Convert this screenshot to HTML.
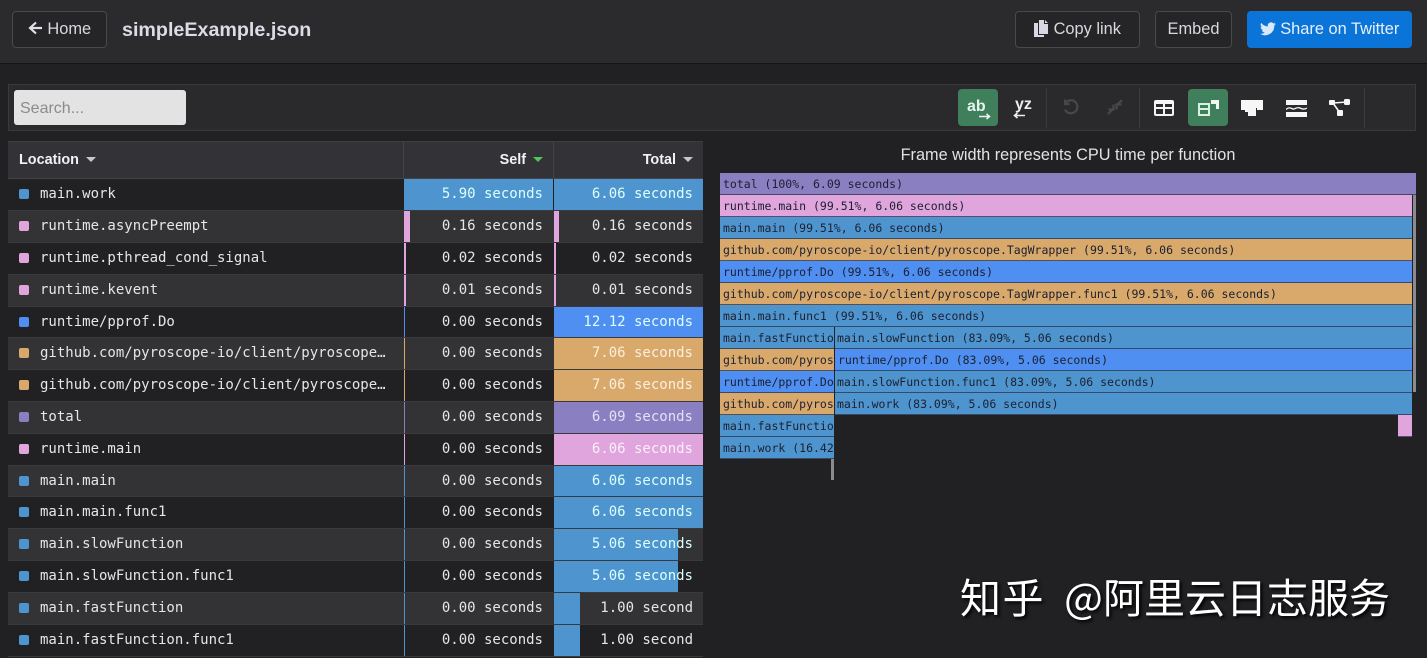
<!DOCTYPE html>
<html><head><meta charset="utf-8"><style>
*{box-sizing:border-box}
html,body{margin:0;padding:0;width:1427px;height:658px;overflow:hidden;background:#212124;font-family:"Liberation Sans",sans-serif;color:#e8e8ee}
#root{position:absolute;left:0;top:0;width:1427px;height:658px;overflow:hidden}
.a{position:absolute}
#hd{left:0;top:0;width:1427px;height:64px;background:#2b2b2e;border-bottom:1px solid #151517}
.btn{position:absolute;top:11px;height:37px;border:1px solid #49494d;border-radius:4px;background:#252528;font-size:16.4px;line-height:35px;text-align:center;color:#d8d8de;white-space:nowrap}
#tb{left:8px;top:84px;width:1408px;height:47px;background:#2a2a2d;border:1px solid #3a3a3e}
.sep{position:absolute;top:88px;height:40px;width:1px;background:#3b3b3f}
.gb{position:absolute;top:89px;width:40px;height:37px;background:#3f7f5c;border-radius:4px}
.ic{position:absolute}
.th{position:absolute;top:141px;height:38px;background:#333337;border-top:1px solid #3d3d41;border-bottom:1px solid #444448;font-weight:bold;font-size:14.4px;line-height:37px;color:#f2f2f5}
.r{position:absolute;left:8px;width:695px;height:32px;border-bottom:1px solid #3a3a3e;font:14px/31px "DejaVu Sans Mono","Liberation Mono",monospace;color:#e6e6ea;white-space:nowrap}
.o{background:#212124}.e{background:#333336}
.sw{position:absolute;left:11px;top:10px;width:10px;height:10px;border-radius:2px}
.n{position:absolute;left:32px;top:0}
.b{position:absolute;top:0;bottom:0}
.v{position:absolute;top:0;width:139px;text-align:right}
.vs{left:396px}.vt{left:546px}
.f{position:absolute;height:22px;border-bottom:1px solid rgba(45,50,70,.75);font:11.5px/23px "DejaVu Sans Mono","Liberation Mono",monospace;color:#1c1f30;padding-left:3px;overflow:hidden;white-space:nowrap}
.fb{background:#4e95cf}.fo{background:#d9a96c}.fp{background:#e0a5dc}.fu{background:#4f8ff2}.fv{background:#8a7fc0}
</style></head><body><div id="root">
<div class="a" id="hd"></div>
<div class="btn" style="left:12px;width:95px"><svg width="15" height="14" viewBox="0 0 15 14" style="vertical-align:-1px"><path d="M14 7H3M8 1.500 2 7l6 5.500" fill="none" stroke="#e0e0e6" stroke-width="2.200"/></svg> Home</div>
<div class="a" style="left:122px;top:18px;font-size:19.700px;font-weight:bold;color:#dcdce6;line-height:24px">simpleExample.json</div>
<div class="btn" style="left:1015px;width:125px"><svg width="15" height="17" viewBox="0 0 15 17" style="vertical-align:-3px"><path d="M5 0h5v4h4v10H5zM11 0l3 3h-3zM0 3h4v12h6v2H0z" fill="#d8d8e4"/></svg> Copy link</div>
<div class="btn" style="left:1155px;width:77px">Embed</div>
<div class="btn" style="left:1247px;width:165px;background:#0a74d8;border-color:#0a74d8;color:#e8f0fa"><svg width="16" height="14" viewBox="0 0 24 20" style="vertical-align:-2px"><path d="M24 2.400a10 10 0 0 1-2.800.8A5 5 0 0 0 23.300.5a10 10 0 0 1-3.100 1.200 4.900 4.900 0 0 0-8.400 4.500A14 14 0 0 1 1.700.9a4.900 4.900 0 0 0 1.500 6.600 5 5 0 0 1-2.200-.6 4.900 4.900 0 0 0 3.900 4.800 5 5 0 0 1-2.200.1 4.900 4.900 0 0 0 4.600 3.400A10 10 0 0 1 0 17.200 14 14 0 0 0 21.500 4.900 10 10 0 0 0 24 2.400z" fill="#d8e8f8"/></svg> Share on Twitter</div>

<div class="a" id="tb"></div>
<div class="a" style="left:14px;top:90px;width:172px;height:35px;background:#e3e3e3;border-radius:3px;font-size:16px;line-height:37px;color:#8b8b8b;padding-left:6px">Search...</div>
<div class="gb" style="left:958px"></div>
<div class="a" style="left:967px;top:97px;font-size:16px;font-weight:bold;color:#e8f2ec;line-height:20px">ab</div>
<svg class="ic" style="left:979px;top:112px" width="13" height="9" viewBox="0 0 13 9"><path d="M0 4.500h10M7.500 2l3 2.500-3 2.500" fill="none" stroke="#e8f2ec" stroke-width="1.600"/></svg>
<div class="a" style="left:1015px;top:95px;font-size:16px;font-weight:bold;color:#eee;line-height:20px">yz</div>
<svg class="ic" style="left:1012px;top:111px" width="13" height="9" viewBox="0 0 13 9"><path d="M13 4.500H3M5.500 2l-3 2.500 3 2.500" fill="none" stroke="#eee" stroke-width="1.600"/></svg>
<div class="sep" style="left:1046px"></div>
<svg class="ic" style="left:1062px;top:98px" width="18" height="18" viewBox="0 0 18 18"><path d="M4 4.500a6.500 6.500 0 1 1-1 7M3 1.500v4.500h4.500" fill="none" stroke="#48484c" stroke-width="2.200"/></svg>
<svg class="ic" style="left:1107px;top:99px" width="16" height="16" viewBox="0 0 16 16"><path d="M1 15l5-5M15 1l-5 5M6.500 5.500v5h-5M9.500 10.500v-5h5" fill="none" stroke="#48484c" stroke-width="2.200"/></svg>
<div class="sep" style="left:1139px"></div>
<svg class="ic" style="left:1154px;top:100px" width="20" height="16" viewBox="0 0 20 16"><path fill-rule="evenodd" d="M2 0h16a2 2 0 0 1 2 2v12a2 2 0 0 1-2 2H2a2 2 0 0 1-2-2V2a2 2 0 0 1 2-2zM2 4v3h7V4zM11 4v3h7V4zM2 9v5h7V9zM11 9v5h7V9z" fill="#f4f4f4"/></svg>
<div class="gb" style="left:1188px"></div>
<svg class="ic" style="left:1198px;top:100px" width="22" height="16" viewBox="0 0 22 16"><path fill-rule="evenodd" d="M0 3h12v13H0zM2 5v3h8V5zM2 10v4h8v-4z" fill="#d8f0e0"/><path d="M13 0h8v9h-3V4h-5z" fill="#f0f8f2"/></svg>
<svg class="ic" style="left:1241px;top:100px" width="22" height="16" viewBox="0 0 22 16"><path d="M0 0h22v10h-6V8h-1v8H7v-4H4v-2H0z" fill="#f6f6f6"/></svg>
<svg class="ic" style="left:1286px;top:100px" width="21" height="17" viewBox="0 0 21 17"><rect x="0" y="0" width="21" height="5" fill="#f6f6f6"/><rect x="0" y="12" width="21" height="5" fill="#f6f6f6"/><path d="M0 9.500c3-3 5-1 7-.5s4-2.500 7-1 5 1.500 7 0" fill="none" stroke="#f6f6f6" stroke-width="1.300"/></svg>
<svg class="ic" style="left:1329px;top:99px" width="22" height="18" viewBox="0 0 22 18"><path d="M4 4l14-1M4 4l7 10" stroke="#f6f6f6" stroke-width="1.600" fill="none"/><rect x="0" y="1" width="6" height="5" rx="1" fill="#f6f6f6"/><rect x="15" y="0" width="6" height="6" rx="1.500" fill="#f6f6f6"/><rect x="8" y="11" width="6" height="6" rx="1" fill="#f6f6f6"/></svg>
<div class="sep" style="left:1364px"></div>

<div class="th" style="left:8px;width:396px;padding-left:11px;border-right:1px solid #444448">Location <svg width="10" height="5" viewBox="0 0 10 5" style="margin-left:3px;vertical-align:2px"><path d="M0 0h10L5 5z" fill="#c8c8cc"/></svg></div>
<div class="th" style="left:404px;width:150px;text-align:right;padding-right:10px;border-right:1px solid #444448">Self <svg width="10" height="5" viewBox="0 0 10 5" style="margin-left:3px;vertical-align:2px"><path d="M0 0h10L5 5z" fill="#4fc65f"/></svg></div>
<div class="th" style="left:554px;width:149px;text-align:right;padding-right:10px">Total <svg width="10" height="5" viewBox="0 0 10 5" style="margin-left:3px;vertical-align:2px"><path d="M0 0h10L5 5z" fill="#c8c8cc"/></svg></div>

<div class="r o" style="top:179px"><i class="sw fb"></i><span class="n">main.work</span><i class="b fb" style="left:396px;width:149px"></i><i class="b fb" style="left:546px;width:149px"></i><span class="v vs" style="color:#dff">5.90 seconds</span><span class="v vt" style="color:#dff">6.06 seconds</span></div>
<div class="r e" style="top:211px"><i class="sw fp"></i><span class="n">runtime.asyncPreempt</span><i class="b fp" style="left:396px;width:6px"></i><i class="b fp" style="left:546px;width:5px"></i><span class="v vs">0.16 seconds</span><span class="v vt">0.16 seconds</span></div>
<div class="r o" style="top:243px"><i class="sw fp"></i><span class="n">runtime.pthread_cond_signal</span><i class="b fp" style="left:396px;width:2px"></i><i class="b fp" style="left:546px;width:2px"></i><span class="v vs">0.02 seconds</span><span class="v vt">0.02 seconds</span></div>
<div class="r e" style="top:275px"><i class="sw fp"></i><span class="n">runtime.kevent</span><i class="b fp" style="left:396px;width:2px"></i><i class="b fp" style="left:546px;width:2px"></i><span class="v vs">0.01 seconds</span><span class="v vt">0.01 seconds</span></div>
<div class="r o" style="top:307px;height:31px"><i class="sw fu"></i><span class="n">runtime/pprof.Do</span><i class="b fu" style="left:396px;width:1px"></i><i class="b fu" style="left:546px;width:149px"></i><span class="v vs">0.00 seconds</span><span class="v vt" style="color:#dff">12.12 seconds</span></div>
<div class="r e" style="top:338px"><i class="sw fo"></i><span class="n">github.com/pyroscope-io/client/pyroscope…</span><i class="b fo" style="left:396px;width:1px"></i><i class="b fo" style="left:546px;width:149px"></i><span class="v vs">0.00 seconds</span><span class="v vt" style="color:#fbeedd">7.06 seconds</span></div>
<div class="r o" style="top:370px"><i class="sw fo"></i><span class="n">github.com/pyroscope-io/client/pyroscope…</span><i class="b fo" style="left:396px;width:1px"></i><i class="b fo" style="left:546px;width:149px"></i><span class="v vs">0.00 seconds</span><span class="v vt" style="color:#fbeedd">7.06 seconds</span></div>
<div class="r e" style="top:402px"><i class="sw fv"></i><span class="n">total</span><i class="b fv" style="left:396px;width:1px"></i><i class="b fv" style="left:546px;width:149px"></i><span class="v vs">0.00 seconds</span><span class="v vt" style="color:#e4e0f6">6.09 seconds</span></div>
<div class="r o" style="top:434px"><i class="sw fp"></i><span class="n">runtime.main</span><i class="b fp" style="left:396px;width:1px"></i><i class="b fp" style="left:546px;width:149px"></i><span class="v vs">0.00 seconds</span><span class="v vt" style="color:#fbeefa">6.06 seconds</span></div>
<div class="r e" style="top:466px;height:31px"><i class="sw fb"></i><span class="n">main.main</span><i class="b fb" style="left:396px;width:1px"></i><i class="b fb" style="left:546px;width:149px"></i><span class="v vs">0.00 seconds</span><span class="v vt" style="color:#dff">6.06 seconds</span></div>
<div class="r o" style="top:497px"><i class="sw fb"></i><span class="n">main.main.func1</span><i class="b fb" style="left:396px;width:1px"></i><i class="b fb" style="left:546px;width:149px"></i><span class="v vs">0.00 seconds</span><span class="v vt" style="color:#dff">6.06 seconds</span></div>
<div class="r e" style="top:529px"><i class="sw fb"></i><span class="n">main.slowFunction</span><i class="b fb" style="left:396px;width:1px"></i><i class="b fb" style="left:546px;width:124px"></i><span class="v vs">0.00 seconds</span><span class="v vt" style="color:#dff">5.06 seconds</span></div>
<div class="r o" style="top:561px"><i class="sw fb"></i><span class="n">main.slowFunction.func1</span><i class="b fb" style="left:396px;width:1px"></i><i class="b fb" style="left:546px;width:124px"></i><span class="v vs">0.00 seconds</span><span class="v vt" style="color:#dff">5.06 seconds</span></div>
<div class="r e" style="top:593px"><i class="sw fb"></i><span class="n">main.fastFunction</span><i class="b fb" style="left:396px;width:1px"></i><i class="b fb" style="left:546px;width:26px"></i><span class="v vs">0.00 seconds</span><span class="v vt">1.00 second</span></div>
<div class="r o" style="top:625px"><i class="sw fb"></i><span class="n">main.fastFunction.func1</span><i class="b fb" style="left:396px;width:1px"></i><i class="b fb" style="left:546px;width:26px"></i><span class="v vs">0.00 seconds</span><span class="v vt">1.00 second</span></div>

<div class="a" style="left:720px;top:145px;width:696px;text-align:center;font-size:16.300px;line-height:20px;color:#e2e2e6">Frame width represents CPU time per function</div>

<div class="a" style="left:1413px;top:195px;width:3px;height:197px;background:#8b8b8f"></div>
<div class="f fv" style="left:720px;top:173px;width:696px">total (100%, 6.09 seconds)</div>
<div class="f fp" style="left:720px;top:195px;width:692px">runtime.main (99.51%, 6.06 seconds)</div>
<div class="f fb" style="left:720px;top:217px;width:692px">main.main (99.51%, 6.06 seconds)</div>
<div class="f fo" style="left:720px;top:239px;width:692px">github.com/pyroscope-io/client/pyroscope.TagWrapper (99.51%, 6.06 seconds)</div>
<div class="f fu" style="left:720px;top:261px;width:692px">runtime/pprof.Do (99.51%, 6.06 seconds)</div>
<div class="f fo" style="left:720px;top:283px;width:692px">github.com/pyroscope-io/client/pyroscope.TagWrapper.func1 (99.51%, 6.06 seconds)</div>
<div class="f fb" style="left:720px;top:305px;width:692px">main.main.func1 (99.51%, 6.06 seconds)</div>
<div class="f fb" style="left:720px;top:327px;width:114px">main.fastFunction</div>
<div class="f fb" style="left:835px;top:327px;width:577px;padding-left:2px">main.slowFunction (83.09%, 5.06 seconds)</div>
<div class="f fo" style="left:720px;top:349px;width:114px">github.com/pyroscope</div>
<div class="f fu" style="left:835px;top:349px;width:577px;padding-left:3px">runtime/pprof.Do (83.09%, 5.06 seconds)</div>
<div class="f fu" style="left:720px;top:371px;width:114px">runtime/pprof.Do</div>
<div class="f fb" style="left:835px;top:371px;width:577px;padding-left:2px">main.slowFunction.func1 (83.09%, 5.06 seconds)</div>
<div class="f fo" style="left:720px;top:393px;width:114px">github.com/pyroscope</div>
<div class="f fb" style="left:835px;top:393px;width:577px;padding-left:2px">main.work (83.09%, 5.06 seconds)</div>
<div class="f fb" style="left:720px;top:415px;width:114px">main.fastFunction</div>
<div class="f fp" style="left:1398px;top:415px;width:14px"></div>
<div class="f fb" style="left:720px;top:437px;width:114px">main.work (16.42%</div>
<div class="a" style="left:831px;top:459px;width:3px;height:21px;background:#8b8b8f"></div>

<div class="a" style="left:960px;top:568px;font:41px/54px 'Noto Sans CJK SC',sans-serif;color:#fff;white-space:nowrap;text-shadow:2px 2px 3px #000;word-spacing:10px"><span style="letter-spacing:1.500px">知乎</span> @阿里云日志服务</div>
</div></body></html>
